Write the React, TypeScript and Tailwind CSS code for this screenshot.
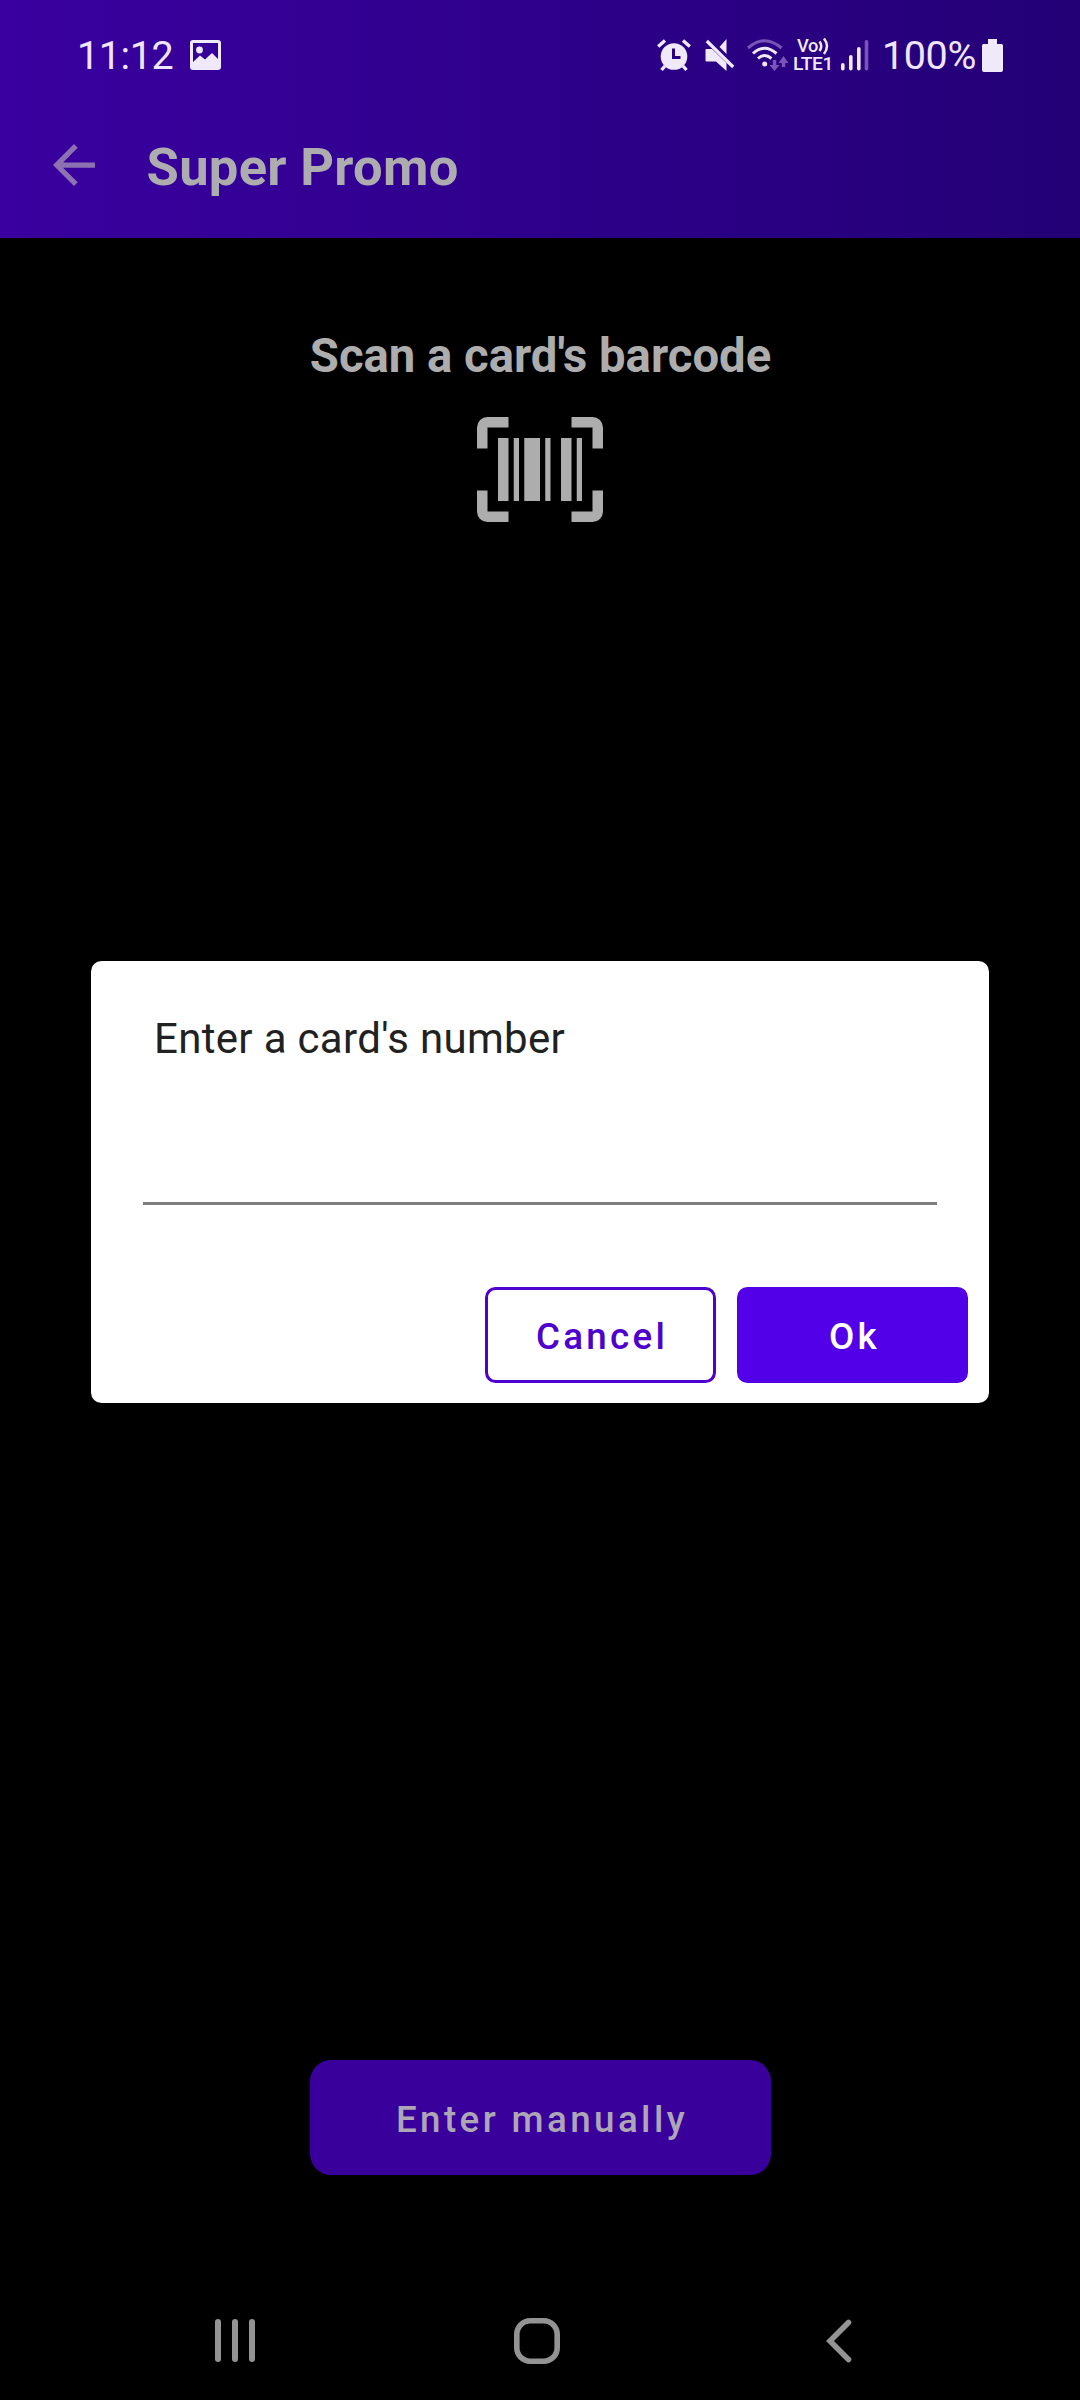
import React from "react";

function ImageIcon() {
  return (
    <svg className="h-[30px] w-[31px]" viewBox="0 0 31 30" fill="#f0e9fa">
      <path
        fillRule="evenodd"
        d="M3 0H28Q31 0 31 3V27Q31 30 28 30H3Q0 30 0 27V3Q0 0 3 0ZM3 3V22L10 15.5L15 19.5L22 13L28 19V3Z"
      />
      <circle cx="9.5" cy="10" r="3.4" />
    </svg>
  );
}

function AlarmIcon() {
  return (
    <svg className="h-[33px] w-[34px]" viewBox="0 0 34 33" fill="none" stroke="#f0e9fa">
      <circle cx="17" cy="17.5" r="13.3" fill="#f0e9fa" stroke="none" />
      <path d="M1.2 7.5L8 1.5M26 1.5L32.800 7.500M4.500 31L8 27M29.500 31L26 27" strokeWidth="3.4" />
      <path d="M16.5 9.500V18.500H23.500" stroke="#2c0087" strokeWidth="3" />
    </svg>
  );
}

function MuteIcon() {
  return (
    <svg className="h-[33px] w-[30px]" viewBox="0 0 30 33" fill="#f0e9fa">
      <path d="M21.500 0V15L14.500 8Z" />
      <path d="M1.500 10H7L21.500 24V32L11 22.500H1.500Q0.500 22.500 0.500 21.500V11Q0.500 10 1.500 10Z" />
      <path d="M1.800 2L28.200 28" stroke="#f0e9fa" strokeWidth="3.2" />
    </svg>
  );
}

function WifiIcon() {
  return (
    <svg className="h-[33px] w-[42px]" viewBox="0 0 42 33" fill="none" stroke="#f0e9fa" strokeWidth="3">
      <path d="M1 9Q17.500 -5.500 34.500 9" stroke="#7b54b8" />
      <path d="M6 14.500Q17.500 4 29.500 14.500M11 19.500Q17.500 13.500 24.500 19.500" />
      <circle cx="17.700" cy="25" r="2.500" fill="#f0e9fa" stroke="none" />
      <path d="M27.500 21V30M36.500 28V20" stroke="#7b54b8" strokeWidth="3.400" />
      <path d="M22.500 26H32.500L27.500 32ZM31.500 24H41.500L36.500 17Z" fill="#7b54b8" stroke="none" />
    </svg>
  );
}

function VolteIcon() {
  return (
    <svg
      className="h-[44px] w-[42px] overflow-visible"
      viewBox="0 -4 42 44"
      fill="#f0e9fa"
      fontFamily="Roboto, sans-serif"
      fontWeight="500"
    >
      <text x="4" y="15" fontSize="19" textLength="21" lengthAdjust="spacingAndGlyphs">Vo</text>
      <text x="0" y="32.500" fontSize="19" textLength="40" lengthAdjust="spacingAndGlyphs">LTE1</text>
      <path d="M26.500 4.500Q30 9 26.500 14M31 1.500Q37 9 31 17" fill="none" stroke="#f0e9fa" strokeWidth="2.500" />
    </svg>
  );
}

function SignalIcon() {
  return (
    <svg className="h-[31px] w-[28px]" viewBox="0 0 28 31" fill="#f0e9fa">
      <rect x="0" y="23" width="3.600" height="7.500" rx="1.700" />
      <rect x="8" y="15" width="3.600" height="15.500" rx="1.700" />
      <rect x="16" y="7" width="3.600" height="23.500" rx="1.700" />
      <rect x="23.700" y="0" width="3.600" height="30.500" rx="1.700" fill="#7b54b8" />
    </svg>
  );
}

function BatteryIcon() {
  return (
    <svg className="h-[33px] w-[21px]" viewBox="0 0 21 33" fill="#f0e9fa">
      <path d="M6 0H15V5H19.500Q21 5 21 6.500V31Q21 33 19 33H2Q0 33 0 31V6.500Q0 5 1.500 5H6Z" />
    </svg>
  );
}

function StatusBar() {
  return (
    <div className="flex h-[110px] items-center pr-[77px] pl-[77px] text-[39.5px] leading-none tracking-[-0.4px] text-[#f0e6fc]">
      <span className="w-[113px] pt-px whitespace-nowrap">11:12</span>
      <ImageIcon />
      <div className="ml-auto flex items-center">
        <AlarmIcon />
        <div className="ml-[14px]"><MuteIcon /></div>
        <div className="ml-[12px]"><WifiIcon /></div>
        <div className="ml-[4px]"><VolteIcon /></div>
        <div className="ml-[6px]"><SignalIcon /></div>
        <span className="ml-[13px] w-[100px] pt-px whitespace-nowrap">100%</span>
        <BatteryIcon />
      </div>
    </div>
  );
}

function ScanScreen() {
  return (
    <main className="flex flex-1 flex-col items-center pt-[90px] text-[#adadad]">
      <h2 className="pl-px text-[47.25px] leading-[56px] font-bold">Scan a card's barcode</h2>
      <svg className="mt-[32.5px] h-[105px] w-[126px]" viewBox="0 0 24 20" fill="#adadad">
        <path d="M2 0H6V2H2V6H0V2A2 2 0 0 1 2 0ZM22 0A2 2 0 0 1 24 2V6H22V2H18V0ZM0 14H2V18H6V20H2A2 2 0 0 1 0 18ZM22 14H24V18A2 2 0 0 1 22 20H18V18H22Z" />
        <path d="M4 4H6V16H4ZM7 4H8V16H7ZM9 4H12V16H9ZM13 4H14V16H13ZM16 4H18V16H16ZM19 4H20V16H19Z" />
      </svg>
      <button className="mt-auto mb-[106px] h-[115px] w-[461px] rounded-[21px] bg-[#39009c] pt-1 pl-[4px] text-[36.75px] font-medium tracking-[3.4px] text-[#ada6b5]">
        Enter manually
      </button>
    </main>
  );
}

function NavBar() {
  return (
    <nav className="flex h-[119px] items-center pl-[214.5px]">
      <div className="flex w-[299px] gap-[11.3px]">
        <span className="h-[43px] w-[6px] rounded-full bg-[#939393]" />
        <span className="h-[43px] w-[6px] rounded-full bg-[#939393]" />
        <span className="h-[43px] w-[6px] rounded-full bg-[#939393]" />
      </div>
      <svg className="h-[46px] w-[46px]" viewBox="0 0 46 46" fill="none" stroke="#939393" strokeWidth="5.600">
        <rect x="2.800" y="2.800" width="40.400" height="40.400" rx="13.500" />
      </svg>
      <svg className="ml-[266px] h-[44px] w-[26px]" viewBox="0 0 26 44" fill="none" stroke="#939393" strokeWidth="5.600" strokeLinecap="round">
        <path d="M22.500 3.500L4 22L22.500 40.500" />
      </svg>
    </nav>
  );
}

function CardNumberDialog() {
  return (
    <div className="absolute top-[961px] left-[91px] flex h-[442px] w-[898px] flex-col rounded-[10.5px] bg-white">
      <label className="mt-[54px] ml-[63px] text-[42px] leading-[48px] tracking-[0.32px] text-[#212121]">
        Enter a card's number
      </label>
      <div className="mx-[52px] mt-[139px] h-[3px] bg-[#7f7f7f]" />
      <div className="mt-auto mr-[21px] mb-[20px] flex justify-end gap-[21px] text-[36.75px] font-medium tracking-[3.28px]">
        <button className="h-[96px] w-[231px] rounded-[10.5px] border-[3px] border-[#4d00ce] pt-[3px] pl-[3px] text-[#4d00ce]">
          Cancel
        </button>
        <button className="h-[96px] w-[231px] rounded-[10.5px] bg-[#5200e7] pt-[3px] pl-[4px] text-white">Ok</button>
      </div>
    </div>
  );
}

export default function App() {
  return (
    <div className="relative flex h-[2400px] w-[1080px] flex-col overflow-hidden bg-black font-['Roboto',sans-serif]">
      <header className="h-[238px] bg-linear-to-r from-[#3a00a0] to-[#230076]">
        <StatusBar />
        <div className="flex h-[128px] items-center pb-[14px] pl-[52.5px]">
          <svg className="mb-[5px] h-[42px] w-[42px]" viewBox="4 4 16 16" fill="#8d72b3">
            <path d="M20 11H7.830L13.420 5.410L12 4L4 12L12 20L13.410 18.590L7.830 13H20Z" />
          </svg>
          <h1 className="ml-[52px] text-[52.5px] leading-none font-bold tracking-[0.3px] text-[#adadb0]">Super Promo</h1>
        </div>
      </header>
      <ScanScreen />
      <NavBar />
      <CardNumberDialog />
    </div>
  );
}
